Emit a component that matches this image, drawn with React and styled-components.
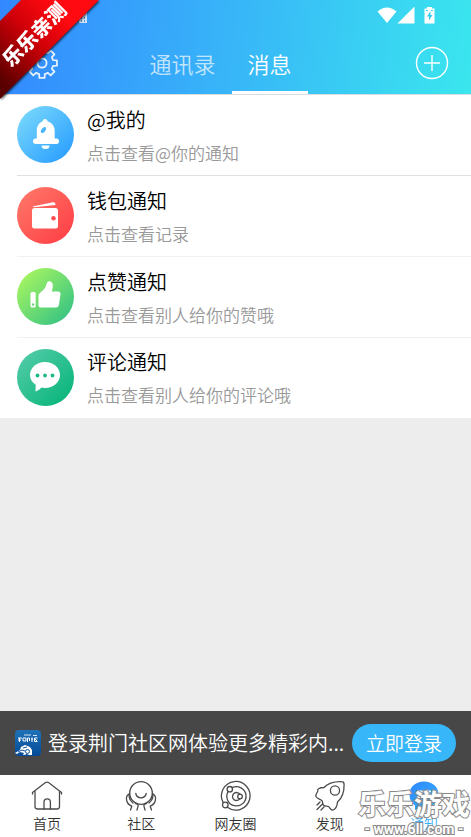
import React, { useState } from 'react'
import styled, { createGlobalStyle } from "styled-components";

const notices = [
    { id: "at", title: "@我的", desc: "点击查看@你的通知", from: "#7fdcfb", to: "#2299ff", Icon: BellIcon },
    { id: "wallet", title: "钱包通知", desc: "点击查看记录", from: "#ff7a6b", to: "#ff3b43", Icon: WalletIcon },
    { id: "like", title: "点赞通知", desc: "点击查看别人给你的赞哦", from: "#b4fb5c", to: "#29bd88", Icon: ThumbIcon },
    { id: "comment", title: "评论通知", desc: "点击查看别人给你的评论哦", from: "#58cdaa", to: "#02b377", Icon: ChatIcon },
];

const tabs = [
    { id: "home", label: "首页", Icon: HomeIcon },
    { id: "community", label: "社区", Icon: CommunityIcon },
    { id: "circle", label: "网友圈", Icon: OrbitIcon },
    { id: "discover", label: "发现", Icon: RocketIcon },
    { id: "notice", label: "通知", Icon: NoticeIcon },
];

function App() {
    const [active, setActive] = useState("notice");

    return (
        <Page>
            <GlobalStyle />
            <Header>
                <StatusBar>
                    <StatusLeft><SimIcon /></StatusLeft>
                    <StatusRight>
                        <SignalIcons />
                    </StatusRight>
                </StatusBar>
                <Nav>
                    <IconButton aria-label="设置"><GearIcon /></IconButton>
                    <NavTabs>
                        <NavTab>通讯录</NavTab>
                        <NavTab $active>消息</NavTab>
                    </NavTabs>
                    <IconButton aria-label="添加"><PlusIcon /></IconButton>
                </Nav>
            </Header>

            <List>
                {notices.map(({ id, title, desc, from, to, Icon }) => (
                    <Item key={id}>
                        <Avatar $from={from} $to={to}><Icon /></Avatar>
                        <ItemText>
                            <ItemTitle>{title}</ItemTitle>
                            <ItemDesc>{desc}</ItemDesc>
                        </ItemText>
                    </Item>
                ))}
            </List>

            <LoginBar>
                <AppLogo />
                <LoginText>登录荆门社区网体验更多精彩内...</LoginText>
                <LoginButton>立即登录</LoginButton>
            </LoginBar>

            <TabBar>
                {tabs.map(({ id, label, Icon }) => (
                    <TabButton key={id} $active={id === active} onClick={() => setActive(id)}>
                        <Icon />
                        {label}
                    </TabButton>
                ))}
            </TabBar>

            <RibbonShadow>
                <Ribbon><RibbonText>乐乐亲测</RibbonText></Ribbon>
            </RibbonShadow>
            <Watermark>
                <WatermarkName>乐乐游戏</WatermarkName>
                <WatermarkUrl>- www.6ll.com -</WatermarkUrl>
            </Watermark>
        </Page>
    );
}

export default App

/* status bar */

function SimIcon() {
    return (
        <svg width="10" height="12" viewBox="0 0 10 12">
            <path d="M3 0h5a1 1 0 0 1 1 1v10H1V2z" fill="#cfe3fb" />
            <path d="M3 5h1v2H3zM6 5h1v2H6zM3 8h1v2H3zM6 8h1v2H6z" fill="#5b8fd0" />
        </svg>
    );
}

function SignalIcons() {
    return (
        <svg width="60" height="18" viewBox="0 0 60 18">
            <path d="M0.5 4.5Q10 -3.5 19.5 4.5L10 16z" fill="#fff" />
            <path d="M38 0V17H21z" fill="#fff" transform="translate(-0.5 -0.5)" />
            <path d="M50 0h5v1.5h2.500V16.500H47.500V1.500H50z" fill="#fff" />
            <path d="M53.500 4l-3.500 5.500h2v4l3.500-5.500h-2z" fill="#38cdf0" />
            <path d="M49 3h2v1h-2zM54 3h2v1h-2z" fill="#38cdf0" />
        </svg>
    );
}

/* header */

function GearIcon() {
    const teeth = [];
    const point = (r, deg) => {
        const a = (deg * Math.PI) / 180;
        return `${(16 + r * Math.cos(a)).toFixed(2)} ${(16 + r * Math.sin(a)).toFixed(2)}`;
    };
    for (let i = 0; i < 8; i++) {
        const c = i * 45;
        teeth.push(`${point(11.5, c - 14)} L${point(15.2, c - 10)} L${point(15.2, c + 10)} L${point(11.5, c + 14)}`);
    }
    return (
        <svg width="32" height="32" viewBox="0 0 32 32" fill="none" stroke="#e6f3ff" strokeWidth="1.8" strokeLinejoin="round">
            <path d={`M${teeth.join(" L")}Z`} />
            <circle cx="16" cy="16" r="4.600" />
        </svg>
    );
}

function PlusIcon() {
    return (
        <svg width="34" height="34" viewBox="0 0 34 34" fill="none" stroke="#fff" strokeWidth="1.4">
            <circle cx="17" cy="17" r="15.500" />
            <path d="M17 9v16M9 17h16" />
        </svg>
    );
}

/* notice icons */

function BellIcon() {
    return (
        <svg width="56" height="56" viewBox="0 0 56 56">
            <path d="M28 13c1.500 0 2.500 1 2.700 2.600 4.300 1.200 7 4.600 7 9.400v7.500h1.600a2.700 2.700 0 0 1 0 5.400H18.700a2.700 2.700 0 0 1 0-5.400h1.100V25c0-4.800 2.200-8.200 5.700-9.400C25.700 14 26.500 13 28 13z" fill="#fff" />
            <path d="M24.500 39.500h8a4 3.600 0 0 1-8 0z" fill="#fff" />
            <ellipse cx="26.500" cy="24" rx="1.900" ry="3.400" transform="rotate(38 26.500 24)" fill="#49b5fd" />
        </svg>
    );
}

function WalletIcon() {
    return (
        <svg width="56" height="56" viewBox="0 0 56 56" fill="#fff">
            <path d="M15.500 19.500L36 15.200q1.800-.3 2.200 1.300l.3 1.500L17 20.300z" />
            <rect x="15" y="21" width="26" height="20.500" rx="2.500" />
            <circle cx="36.500" cy="31.300" r="2.200" fill="#ff4c50" />
        </svg>
    );
}

function ThumbIcon() {
    return (
        <svg width="56" height="56" viewBox="0 0 56 56" fill="#fff">
            <rect x="13.500" y="24" width="5.200" height="15.500" rx="1.500" />
            <circle cx="16.100" cy="36.500" r="1.200" fill="#65d77d" />
            <path d="M21.500 37V27.500q0-1.500 1.300-2.500c3.400-2.500 5.900-5 6.900-9.400.4-1.800 1.600-2.600 3-2.400 2.300.3 3.300 2.600 3.100 5.400-.1 1.600-.5 3.200-1.100 4.900h6.200q3 0 2.600 3l-1.600 10.500q-.5 2.600-3 2.600H24q-2.500 0-2.500-2.600z" />
        </svg>
    );
}

function ChatIcon() {
    return (
        <svg width="56" height="56" viewBox="0 0 56 56">
            <path d="M28 13c8.500 0 15 5.700 15 13s-6.500 13-15 13c-1.200 0-2.400-.1-3.500-.4-1.700 2-3.800 3.200-6 3.900l.2-6.800C15 33.600 13 30 13 26c0-7.300 6.500-13 15-13z" fill="#fff" />
            <g fill="#22b98a">
                <circle cx="20.500" cy="26.500" r="1.900" />
                <circle cx="28" cy="26.500" r="1.900" />
                <circle cx="35.500" cy="26.500" r="1.900" />
            </g>
        </svg>
    );
}

/* login bar */

function AppLogo() {
    return (
        <Logo width="26" height="26" viewBox="0 0 26 26">
            <defs>
                <linearGradient id="logo" x1="0" y1="0" x2="0" y2="1">
                    <stop offset="0" stopColor="#1f72b8" />
                    <stop offset="1" stopColor="#044a96" />
                </linearGradient>
            </defs>
            <rect width="26" height="26" rx="4" fill="url(#logo)" />
            <path d="M9 5h7M18 5.500h4" stroke="#d4e6f5" strokeWidth="1.200" />
            <path d="M3 8h4M3 10h3M4.500 8v4M8 8h3v3H8zM12.500 8v4M12.500 8h2v3M16 9h2M17 7.500V12M19.500 8h3M19.500 8v3.500h3M20 9l2 2" stroke="#fff" fill="none" strokeWidth="1" />
            <path d="M0 23l5-3 1-3 4-2 5 2 2 3v5h-3l-2-1-3 1H8l1-2-4-1-3 2z" fill="#fff" />
            <path d="M3 22l4-2 3 1M8 18l4-1" stroke="#0a519c" fill="none" />
            <circle cx="12.500" cy="21.500" r="2" fill="none" stroke="#0a519c" />
        </Logo>
    );
}

/* tab bar icons, one stroke style for all of them */

function HomeIcon() {
    return (
        <TabSvg viewBox="0 0 30 30">
            <path d="M.5 13v-1.500L13.500 1.600q1.500-1.100 3 0L29.500 11.500V13M3 10.500V25.500q0 2.500 2.500 2.500H25q2.500 0 2.500-2.500v-15" />
            <path d="M12 28V21a3.200 3.200 0 0 1 6.400 0v7" />
        </TabSvg>
    );
}

function CommunityIcon() {
    return (
        <TabSvg viewBox="0 0 30 30">
            <circle cx="15" cy="12" r="11.300" />
            <path d="M9.800 12.500a5.300 5.300 0 0 0 10.400 0" />
            <path d="M3.500 12.500C1 14 0 17 .7 19.500c.6 2.800 2.300 4.500 5.100 5.700L4.500 29M3.500 12.500c-1.200 4 .5 7 3.500 9.500M9.500 22.500c2.500.2 3 1.500 2.400 3.200L11 29" />
            <path d="M26.500 12.500c2.500 1.500 3.500 4.500 2.800 7-.6 2.800-2.300 4.500-5.100 5.700l1.300 3.800M26.500 12.500c1.200 4-.5 7-3.500 9.500M20.500 22.500c-2.500.2-3 1.500-2.400 3.200L19 29" />
        </TabSvg>
    );
}

function OrbitIcon() {
    return (
        <TabSvg viewBox="0 0 30 30">
            <path d="M2.100 21.400A14.300 14.300 0 1 1 6.300 26.300" />
            <path d="M11.200 6.700A9.600 9.600 0 1 1 7.200 10.400" />
            <circle cx="4.300" cy="24" r="2.800" />
            <circle cx="8.800" cy="8.200" r="2.700" />
            <path d="M18.800 13.200a4 4 0 1 0 0 4.600" />
            <circle cx="19" cy="15.500" r="2.300" />
        </TabSvg>
    );
}

function RocketIcon() {
    return (
        <TabSvg viewBox="0 0 30 30">
            <path d="M9 6.500C13 2 19 .5 26.500.7q2.500 0 2.600 2.500C29.300 10.500 27 17 22.500 21c-.3 3.500-1.500 7-4.500 8-2.500.5-3-2.500-4.500-3.500-1.600-.8-3.500.3-5-1.200-1.200-1.200-.5-3.300-1.500-4.700C5.500 18 1 17.500.7 15c.3-1.500 1-3 2-4.500C2 8 4.500 6.500 9 6.500z" />
            <circle cx="20" cy="9.500" r="4.600" />
            <path d="M5 21l-3 3M7.500 23l-5.500 5.500M9 26l-3 3" />
        </TabSvg>
    );
}

function NoticeIcon() {
    return (
        <TabSvg viewBox="0 0 30 30">
            <defs>
                <linearGradient id="notice" x1="0" y1="0" x2="1" y2="1">
                    <stop offset="0" stopColor="#2f86ff" />
                    <stop offset="1" stopColor="#34b4f8" />
                </linearGradient>
            </defs>
            <path d="M15 .5c8.500 0 14.500 5.500 14.500 13S23.500 27 15 27c-1.500 0-3-.2-4.500-.6L6 29v-4.500C2.500 22 .5 18.500.5 13.500.5 6 6.500.5 15 .5z" fill="url(#notice)" stroke="none" />
            <path d="M9 10.500h12M9 16h8" stroke="#fff" strokeWidth="2" />
        </TabSvg>
    );
}

const GlobalStyle = createGlobalStyle`
    * {
        box-sizing: border-box;
    }

    body {
        margin: 0;
        font-family: "Noto Sans CJK SC", sans-serif;
        font-weight: 350;
    }

    button {
        border: 0;
        padding: 0;
        background: none;
        color: inherit;
        font: inherit;
        cursor: pointer;
    }

    svg {
        display: block;
    }
`;

const Page = styled.div`
    position: relative;
    display: flex;
    flex-direction: column;
    min-height: 100vh;
    overflow: hidden;
    background: #ededed;
`;

const Header = styled.header`
    border-bottom: 1px solid #d9dde0;
    background: linear-gradient(97deg, #3388ff 0%, #38b6f8 50%, #3ae6ee 100%);
`;

const StatusBar = styled.div`
    display: flex;
    justify-content: space-between;
    align-items: center;
    height: 31px;
    padding: 0 34px 0 78px;
`;

const StatusLeft = styled.div`
    padding-top: 4px;
`;

const StatusRight = styled.div`
    display: flex;
`;

const Nav = styled.nav`
    display: grid;
    grid-template-columns: 32px 1fr 34px;
    height: 63px;
    padding: 0 22px 0 26px;
`;

const IconButton = styled.button`
    display: flex;
    align-items: center;
    justify-content: center;
`;

const NavTabs = styled.div`
    display: flex;
    justify-content: center;
    padding-right: 32px;
`;

const NavTab = styled.button`
    padding: 3px 16px 0;
    border-bottom: 3px solid ${({ $active }) => ($active ? "#fff" : "transparent")};
    color: ${({ $active }) => ($active ? "#fff" : "rgba(255, 255, 255, 0.7)")};
    font-size: 22px;
    line-height: 32px;
`;

const List = styled.ul`
    flex: 1;
    margin: 0;
    padding: 0;
    list-style: none;
`;

const Item = styled.li`
    display: flex;
    align-items: center;
    gap: 13px;
    height: 81px;
    padding: 0 0 2px 17px;
    background: linear-gradient(#f1f1f1, #f1f1f1) 17px 100% / 100% 1px no-repeat #fff;

    &:first-child {
        background-image: linear-gradient(#e0e0e0, #e0e0e0);
    }

    &:last-child {
        height: 80px;
        background: #fff;
    }
`;

const Avatar = styled.div`
    flex: none;
    width: 57px;
    height: 57px;
    border-radius: 50%;
    background: linear-gradient(135deg, ${({ $from }) => $from}, ${({ $to }) => $to});
`;

const ItemText = styled.div`
    min-width: 0;
    padding-top: 2px;
`;

const ItemTitle = styled.div`
    color: #000;
    font-size: 20px;
    line-height: 34px;
`;

const ItemDesc = styled.div`
    color: #999;
    font-size: 17px;
    line-height: 32px;
`;

const LoginBar = styled.div`
    display: flex;
    align-items: center;
    height: 64px;
    padding: 0 15px;
    background: #474747;
    color: #fff;
`;

const Logo = styled.svg`
    flex: none;
`;

const LoginText = styled.div`
    flex: 1;
    min-width: 0;
    padding-left: 7px;
    overflow: hidden;
    white-space: nowrap;
    font-size: 20px;
    line-height: 32px;
`;

const LoginButton = styled.button`
    flex: none;
    height: 38px;
    padding: 0 14px;
    border-radius: 19px;
    background: #37b6fa;
    font-size: 19px;
    line-height: 38px;
`;

const TabBar = styled.nav`
    display: flex;
    height: 62px;
    background: #fff;
`;

const TabButton = styled.button`
    flex: 1;
    display: flex;
    flex-direction: column;
    align-items: center;
    padding-top: 6px;
    color: ${({ $active }) => ($active ? "#38b0f8" : "#333")};
    font-size: 14px;
    line-height: 24px;
`;

const TabSvg = styled.svg`
    width: 30px;
    height: 30px;
    overflow: visible;
    fill: none;
    stroke: #4a4a4a;
    stroke-width: 1.3;
    stroke-linecap: round;
    stroke-linejoin: round;
`;

const RibbonShadow = styled.div`
    position: absolute;
    top: 0;
    left: 0;
    filter: drop-shadow(1px 1px 1px rgba(0, 0, 0, 0.7));
`;

const Ribbon = styled.div`
    display: flex;
    align-items: center;
    justify-content: center;
    width: 99px;
    height: 99px;
    padding: 0 32px 32px 0;
    clip-path: polygon(21px 0, 100% 0, 0 100%, 0 21px);
    background: linear-gradient(45deg, #5a0000 10%, #d00008 48%, #ff0a10 75%);
`;

const RibbonText = styled.span`
    flex: none;
    color: #fff;
    font-size: 20px;
    font-weight: 900;
    line-height: 24px;
    white-space: nowrap;
    transform: rotate(-45deg);
`;

const Watermark = styled.div`
    position: absolute;
    right: 0;
    bottom: 0;
    display: flex;
    flex-direction: column;
    align-items: center;
    padding-right: 1px;
    color: #fff;
    font-family: Roboto, "Noto Sans CJK SC", sans-serif;
    font-weight: 700;
    white-space: nowrap;
    paint-order: stroke fill;
    -webkit-text-stroke: 2px #888;
`;

const WatermarkName = styled.span`
    font-size: 28px;
    line-height: 30px;
`;

const WatermarkUrl = styled.span`
    font-size: 14px;
    line-height: 16px;
`;
